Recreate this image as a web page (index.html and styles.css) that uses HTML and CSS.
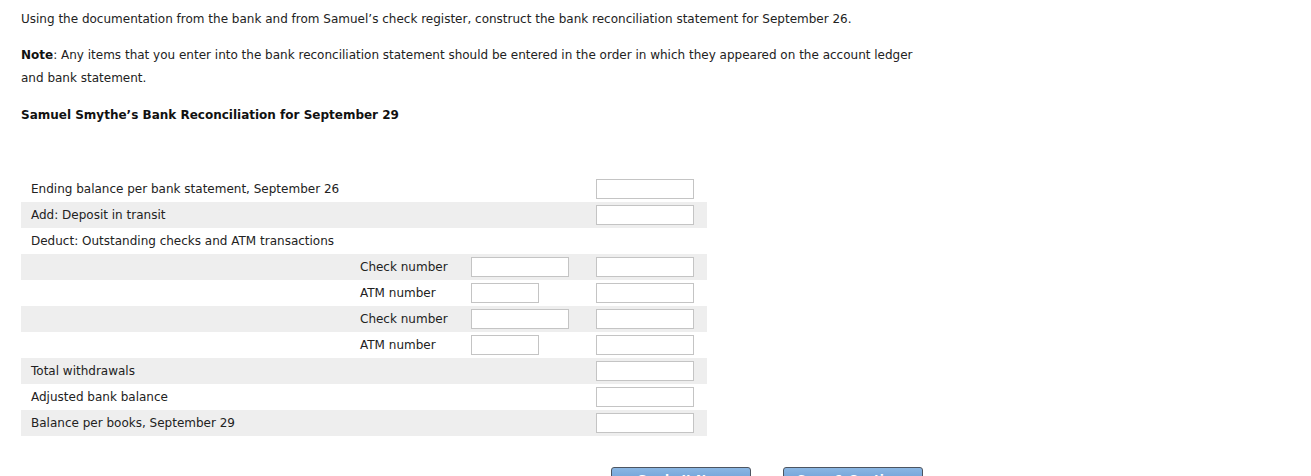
FILE: index.html
```html
<!DOCTYPE html>
<html>
<head>
<meta charset="utf-8">
<link rel="stylesheet" href="styles.css">
</head>
<body>
<div class="page">
  <div class="text">
    <p class="intro">Using the documentation from the bank and from Samuel’s check register, construct the bank reconciliation statement for September 26.</p>
    <p class="note"><b>Note</b>: Any items that you enter into the bank reconciliation statement should be entered in the order in which they appeared on the account ledger and bank statement.</p>
    <h2 class="title">Samuel Smythe’s Bank Reconciliation for September 29</h2>
  </div>

  <div class="recon">
    <div class="row">
      <div class="label">Ending balance per bank statement, September 26</div>
      <div></div><div></div>
      <div class="amt"><input class="box wide" type="text"></div>
    </div>
    <div class="row alt">
      <div class="label">Add: Deposit in transit</div>
      <div></div><div></div>
      <div class="amt"><input class="box wide" type="text"></div>
    </div>
    <div class="row">
      <div class="label">Deduct: Outstanding checks and ATM transactions</div>
      <div></div><div></div><div></div>
    </div>
    <div class="row alt">
      <div class="label"></div>
      <div class="sub">Check number</div>
      <div><input class="box wide" type="text"></div>
      <div class="amt"><input class="box wide" type="text"></div>
    </div>
    <div class="row">
      <div class="label"></div>
      <div class="sub">ATM number</div>
      <div><input class="box narrow" type="text"></div>
      <div class="amt"><input class="box wide" type="text"></div>
    </div>
    <div class="row alt">
      <div class="label"></div>
      <div class="sub">Check number</div>
      <div><input class="box wide" type="text"></div>
      <div class="amt"><input class="box wide" type="text"></div>
    </div>
    <div class="row">
      <div class="label"></div>
      <div class="sub">ATM number</div>
      <div><input class="box narrow" type="text"></div>
      <div class="amt"><input class="box wide" type="text"></div>
    </div>
    <div class="row alt">
      <div class="label">Total withdrawals</div>
      <div></div><div></div>
      <div class="amt"><input class="box wide" type="text"></div>
    </div>
    <div class="row">
      <div class="label">Adjusted bank balance</div>
      <div></div><div></div>
      <div class="amt"><input class="box wide" type="text"></div>
    </div>
    <div class="row alt">
      <div class="label">Balance per books, September 29</div>
      <div></div><div></div>
      <div class="amt"><input class="box wide" type="text"></div>
    </div>
  </div>

  <div class="actions">
    <button class="btn" type="button">Grade It Now</button>
    <button class="btn" type="button">Save &amp; Continue</button>
  </div>
</div>
</body>
</html>
```
FILE: styles.css
```css
html, body {
  margin: 0;
  padding: 0;
  background: #fff;
}
body {
  font-family: "DejaVu Sans", Verdana, sans-serif;
  font-size: 12px;
  color: #222;
  overflow: hidden;
}
.page {
  padding: 8px 21px 0 21px;
}
.text {
  width: 900px;
}
.intro, .note {
  margin: 0;
  line-height: 23px;
}
.note {
  margin-top: 13px;
}
.note b {
  color: #111;
}
.title {
  margin: 14px 0 0 0;
  font-size: 12px;
  line-height: 23px;
  font-weight: bold;
  color: #111;
}
.recon {
  margin-top: 49px;
  width: 686px;
}
.row {
  display: grid;
  grid-template-columns: 339px 111px 125px 111px;
  align-items: center;
  height: 26px;
}
.row.alt {
  background: #eeeeee;
}
.label {
  padding-left: 10px;
  white-space: nowrap;
}
.sub {
  white-space: nowrap;
}
.box {
  display: block;
  box-sizing: border-box;
  height: 20px;
  margin: 0;
  padding: 0 3px;
  border: 1px solid #c4c4c4;
  background: #fff;
  font: inherit;
}
.box.wide {
  width: 98px;
}
.box.narrow {
  width: 68px;
}
.actions {
  display: flex;
  gap: 32px;
  margin-top: 31px;
  padding-left: 590px;
}
.btn {
  width: 140px;
  height: 24px;
  border: 1px solid #4d5560;
  border-radius: 3px 3px 0 0;
  background: linear-gradient(#8ab6e3, #5d93cf);
  color: #fff;
  font-family: "DejaVu Sans", Verdana, sans-serif;
  font-size: 12px;
  font-weight: bold;
  padding: 2px 0 0 0;
  line-height: 14px;
  vertical-align: top;
}
```
